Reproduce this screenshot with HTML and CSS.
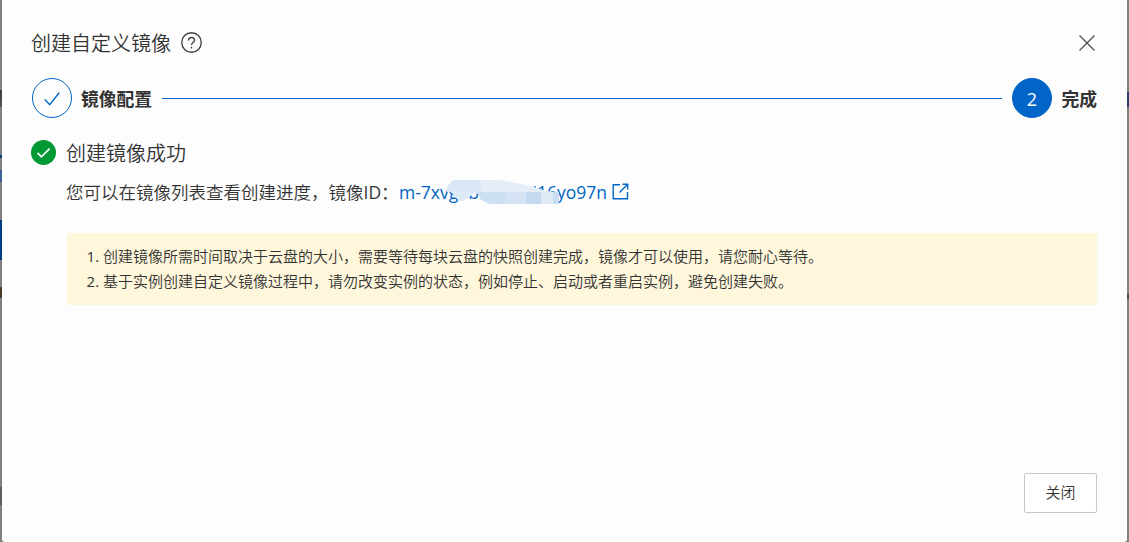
FILE: index.html
```html
<!DOCTYPE html>
<html lang="zh-CN">
<head>
<meta charset="UTF-8">
<meta name="viewport" content="width=device-width, initial-scale=1.0">
<title>创建自定义镜像</title>
<link rel="stylesheet" href="styles.css">
</head>
<body>

<div class="overlay">
    <div class="page-edge page-left"></div>
    <div class="dialog" role="dialog">
        <div class="dialog-header">
            <h1>创建自定义镜像</h1>
            <svg class="help-icon" viewBox="0 0 20 20">
                <circle cx="10" cy="10" r="9.3"/>
                <path d="M7.1 8C7.1 4.3 12.9 4.3 12.9 7.8C12.9 10 10 10 10 12.3M10 14v1.6"/>
            </svg>
            <button class="close-icon" aria-label="关闭">
                <svg viewBox="0 0 16 16"><path d="M.5 .5l15 15M15.5 .5l-15 15"/></svg>
            </button>
        </div>

        <div class="steps">
            <div class="step-circle step-done">
                <svg viewBox="0 0 16 14"><path d="M.8 7.5l4.9 5.2L15.2 .8"/></svg>
            </div>
            <span class="step-title">镜像配置</span>
            <div class="step-line"></div>
            <div class="step-circle step-current">2</div>
            <span class="step-title">完成</span>
        </div>

        <div class="result">
            <svg class="success-icon" viewBox="0 0 26 26">
                <circle cx="13" cy="13" r="13"/>
                <path d="M6.8 13.5l4 4L19.4 9"/>
            </svg>
            <div class="result-body">
                <h2>创建镜像成功</h2>
                <p class="result-desc">
                    <span class="desc-text">您可以在镜像列表查看创建进度，镜像<span class="latin">ID</span>：</span>
                    <a class="image-id" href="#">
                        <span>m-7xvg9b</span>
                        <span>i16yo97n</span>
                        <svg class="id-mask" viewBox="0 0 112 25">
                            <path fill="#dae7f5" d="M6 0H34V12H0V7z"/>
                            <path fill="#e4edf8" d="M34 0H52L70 3L84 6L98 11L111 12H34z"/>
                            <path fill="#dfeaf7" d="M4 12H34V15L28 13L17 21H12z"/>
                            <path fill="#ccdff3" d="M30 12H58V24H43L34 20z"/>
                            <path fill="#d5e3f4" d="M58 12H79V24H58z"/>
                            <path fill="#c5daf1" d="M79 12H94V24H79z"/>
                            <path fill="#e0eaf7" d="M94 12H106V24H94z"/>
                            <path fill="#c8dcf3" d="M106 12H112V24H106z"/>
                        </svg>
                    </a>
                    <svg class="link-icon" viewBox="0 0 17 17">
                        <path d="M8 1.7H1.2v14h14.3V9M7.5 9.5L15.5 1.5M10.5 1.2h5.2v5.3"/>
                    </svg>
                </p>
                <ol class="notice">
                    <li>创建镜像所需时间取决于云盘的大小，需要等待每块云盘的快照创建完成，镜像才可以使用，请您耐心等待。</li>
                    <li>基于实例创建自定义镜像过程中，请勿改变实例的状态，例如停止、启动或者重启实例，避免创建失败。</li>
                </ol>
            </div>
        </div>

        <div class="dialog-footer">
            <button class="btn">关闭</button>
        </div>
    </div>
    <div class="page-edge page-right"></div>
</div>

</body>
</html>
```
FILE: styles.css
```css
* {
    box-sizing: border-box;
}
body {
    margin: 0;
    font-family: "Open Sans", "Noto Sans CJK SC", sans-serif;
    color: #333;
    overflow: hidden;
}
h1, h2, p, ol {
    margin: 0;
    padding: 0;
    font-weight: 350;
}
svg {
    display: block;
    fill: none;
    flex-shrink: 0;
}
.overlay {
    display: flex;
    height: 542px;
    background: #808080;
}
.page-edge {
    width: 2px;
}
.page-left {
    background: linear-gradient(#808080 90px, #403c42 90px, #5a565c 107px, #808080 107px, #808080 155px, #0a4080 155px, #0a4080 158px, #808080 158px, #808080 170px, #3a6294 170px, #3a6294 182px, #808080 182px, #808080 220px, #003d80 220px, #003d80 260px, #808080 260px, #808080 287px, #4a3c28 287px, #4a3c28 298px, #808080 298px, #808080 487px, #5c5c5c 487px, #5c5c5c 505px, #808080 505px);
}
.page-right {
    background: linear-gradient(#808080 92px, #28406a 92px, #28406a 107px, #808080 107px, #808080 294px, #505050 294px, #505050 299px, #808080 299px);
}
.dialog {
    flex: 1;
    display: flex;
    flex-direction: column;
    padding: 28px 30px 29px;
    background: #fdfdfd;
    border-radius: 0 0 3px 3px;
}
.dialog-header {
    display: flex;
    align-items: center;
    height: 30px;
}
.dialog-header h1 {
    margin-left: -1px;
    padding-top: 2px;
    font-size: 20px;
    line-height: 30px;
}
.help-icon {
    width: 21px;
    height: 21px;
    margin-left: 10px;
    margin-bottom: 1px;
    stroke: #444;
    stroke-width: 1.3;
}
.close-icon {
    margin-left: auto;
    margin-right: 2px;
    padding: 0;
    border: none;
    background: none;
}
.close-icon svg {
    width: 16px;
    height: 16px;
    stroke: #555;
    stroke-width: 1.4;
}
.steps {
    display: flex;
    align-items: center;
    height: 40px;
    margin-top: 20px;
}
.step-circle {
    display: flex;
    align-items: center;
    justify-content: center;
    width: 40px;
    height: 40px;
    border: 1px solid #0064c8;
    border-radius: 50%;
    font-size: 18px;
}
.step-done svg {
    width: 16px;
    height: 14px;
    margin-right: 1px;
    margin-top: 2px;
    stroke: #0064c8;
    stroke-width: 1.4;
}
.step-current {
    padding-top: 2px;
    padding-right: 1px;
    background: #0064c8;
    color: #fff;
}
.step-title {
    margin-left: 9px;
    font-size: 17.8px;
    font-weight: 700;
}
.step-line {
    flex: 1;
    height: 1px;
    margin: 0 10px;
    background: #0064c8;
}
.result {
    display: flex;
    margin-top: 20px;
}
.success-icon {
    width: 25px;
    height: 25px;
    margin-top: 2px;
    margin-left: -1px;
    stroke: #fff;
    stroke-width: 1.8;
}
.success-icon circle {
    fill: #009933;
    stroke: none;
}
.result-body {
    flex: 1;
    margin-left: 11px;
}
.result-body h2 {
    height: 30px;
    margin-left: -1px;
    padding-top: 1px;
    font-size: 20px;
    line-height: 30px;
}
.result-desc {
    display: flex;
    align-items: center;
    height: 30px;
    margin-top: 9px;
    margin-left: -1px;
    font-size: 17.5px;
}
.desc-text {
    width: 333px;
    white-space: nowrap;
    line-height: 26px;
}
.latin {
    font-weight: 400;
}
.image-id {
    position: relative;
    display: flex;
    justify-content: space-between;
    width: 208px;
    color: #0064c8;
    font-weight: 400;
    text-decoration: none;
}
.id-mask {
    position: absolute;
    left: 48px;
    top: 0;
    width: 112px;
    height: 25px;
}
.link-icon {
    width: 17px;
    height: 17px;
    margin-left: 5px;
    margin-bottom: 2px;
    stroke: #0064c8;
    stroke-width: 1.4;
}
.notice {
    height: 72px;
    margin-top: 26px;
    padding: 11px 0 0 36px;
    background: #fff7db;
    border-radius: 2px;
    font-size: 15px;
    line-height: 25px;
}
.notice li::marker {
    font-weight: 400;
}
.dialog-footer {
    display: flex;
    justify-content: flex-end;
    margin-top: auto;
}
.btn {
    width: 73px;
    height: 40px;
    padding: 0 0 4px;
    border: 1px solid #c8c8c8;
    border-radius: 2px;
    background: #fff;
    color: #333;
    font-family: inherit;
    font-size: 15px;
    font-weight: 350;
}
```
